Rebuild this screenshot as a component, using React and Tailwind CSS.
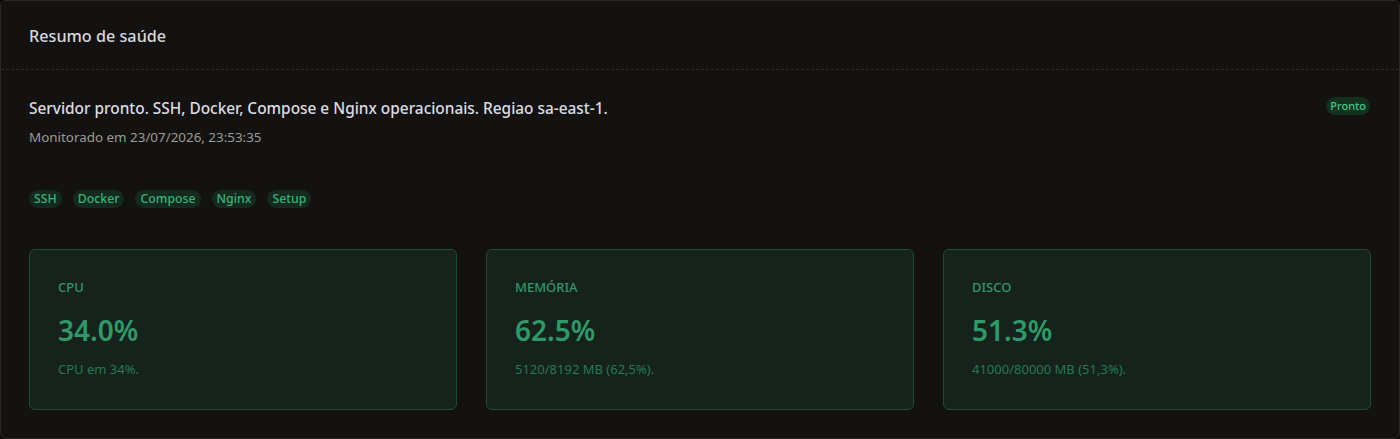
import React from "react";

const tags = ["SSH", "Docker", "Compose", "Nginx", "Setup"];
const metrics = [
  { label: "CPU", value: "34.0%", detail: "CPU em 34%." },
  { label: "MEMÓRIA", value: "62.5%", detail: "5120/8192 MB (62,5%)." },
  { label: "DISCO", value: "51.3%", detail: "41000/80000 MB (51,3%)." },
];

export default function App() {
  return (
    <div
      className="w-[1400px] h-[439px] bg-[#0c0b0a]"
      style={{ fontFamily: "'Noto Sans', Lato, sans-serif" }}
    >
      <div className="h-full rounded-md border border-[#2a2724] bg-[#141211] flex flex-col">
        <div className="h-[69px] px-7 pt-[2px] flex items-center border-b border-dashed border-[#2c2a27]">
          <h2 className="text-[16.2px] font-medium text-[#d6d8da]">Resumo de saúde</h2>
        </div>
        <div className="flex-1 px-7 pt-[29px] pb-7 flex flex-col">
          <div className="flex items-start justify-between">
            <div>
              <p className="text-[15.4px] font-medium text-[#dadde1] leading-5">
                Servidor pronto. SSH, Docker, Compose e Nginx operacionais. Regiao sa-east-1.
              </p>
              <p className="mt-[8px] text-[13.4px] text-[#9b9a98] leading-5">
                Monitorado em 23/07/2026, 23:53:35
              </p>
            </div>
            <span className="mt-[-2px] mr-[1px] rounded-full bg-[#14301f] px-[4px] py-[2px] text-[11px] font-medium leading-[14px] text-[#3cc98a]">
              Pronto
            </span>
          </div>
          <div className="mt-[43px] flex gap-[11px]">
            {tags.map((t) => (
              <span
                key={t}
                className="rounded-full bg-[#142a1f] px-[5px] py-[1px] text-[12.3px] font-medium leading-[16px] text-[#34b27a]"
              >
                {t}
              </span>
            ))}
          </div>
          <div className="mt-auto grid grid-cols-3 gap-[29px]">
            {metrics.map((m) => (
              <div
                key={m.label}
                className="h-[161px] rounded-md border border-[#1f4d37] bg-[#16221c] px-7 pt-[29px]"
              >
                <div className="text-[13px] font-medium text-[#2e9868] leading-4">{m.label}</div>
                <div className="mt-[19px] text-[28px] font-semibold text-[#2c9a69] leading-8">{m.value}</div>
                <div className="mt-[15px] text-[13px] text-[#247a55] leading-4">{m.detail}</div>
              </div>
            ))}
          </div>
        </div>
      </div>
    </div>
  );
}
